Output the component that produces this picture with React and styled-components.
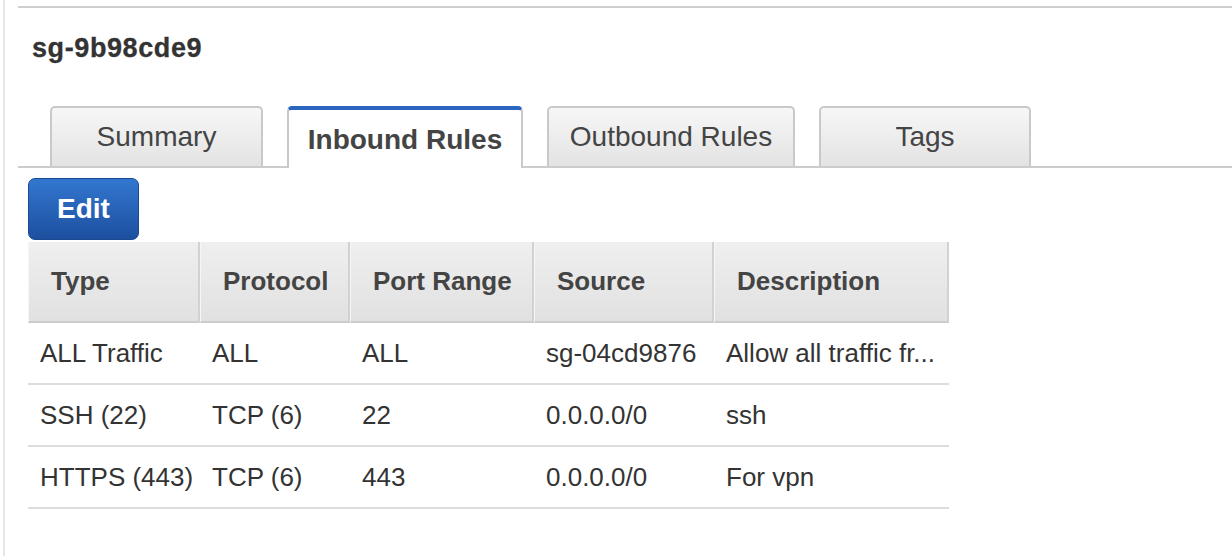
import React from 'react'
import styled, { createGlobalStyle } from 'styled-components'

const GlobalStyle = createGlobalStyle`
  body {
    margin: 0;
    background: #fff;
    font-family: "Liberation Sans", Arial, Helvetica, sans-serif;
    color: #333;
  }
`

const tabs = [
  { label: 'Summary', width: 213 },
  { label: 'Inbound Rules', width: 236, active: true },
  { label: 'Outbound Rules', width: 248 },
  { label: 'Tags', width: 212 },
]

const columns = [
  { label: 'Type', width: 172 },
  { label: 'Protocol', width: 150 },
  { label: 'Port Range', width: 184 },
  { label: 'Source', width: 180 },
  { label: 'Description', width: 235 },
]

const rules = [
  ['ALL Traffic', 'ALL', 'ALL', 'sg-04cd9876', 'Allow all traffic fr...'],
  ['SSH (22)', 'TCP (6)', '22', '0.0.0.0/0', 'ssh'],
  ['HTTPS (443)', 'TCP (6)', '443', '0.0.0.0/0', 'For vpn'],
]

export default function App() {
  return (
    <Page>
      <GlobalStyle />
      <Panel>
        <Title>sg-9b98cde9</Title>

        <TabBar>
          {tabs.map(t => (
            <Tab key={t.label} $active={t.active} $width={t.width}>
              {t.label}
            </Tab>
          ))}
        </TabBar>

        <Content>
          <EditButton>Edit</EditButton>

          <RulesTable>
            <colgroup>
              {columns.map(c => (
                <col key={c.label} style={{ width: c.width }} />
              ))}
            </colgroup>
            <thead>
              <tr>
                {columns.map(c => (
                  <HeadCell key={c.label}>{c.label}</HeadCell>
                ))}
              </tr>
            </thead>
            <tbody>
              {rules.map((r, i) => (
                <tr key={i}>
                  {r.map((v, j) => (
                    <Cell key={j}>{v}</Cell>
                  ))}
                </tr>
              ))}
            </tbody>
          </RulesTable>
        </Content>
      </Panel>
    </Page>
  )
}

const Page = styled.div`
  margin-left: 3px;
  border-left: 2px solid #e6e6e6;
  min-height: 100vh;
  padding-left: 13px;
  padding-top: 6px;
  box-sizing: border-box;
`

const Panel = styled.div`
  border-top: 2px solid #cfcfcf;
`

const Title = styled.h2`
  margin: 0;
  padding: 25px 0 0 14px;
  font-size: 27px;
  line-height: 30px;
  letter-spacing: 0.6px;
  font-weight: bold;
  color: #333;
  -webkit-text-stroke: 0.3px #333;
`

const TabBar = styled.div`
  display: flex;
  align-items: flex-end;
  gap: 24px;
  margin-top: 43px;
  padding-left: 32px;
  border-bottom: 2px solid #cccccc;
`

const Tab = styled.div`
  box-sizing: border-box;
  width: ${p => p.$width}px;
  display: flex;
  align-items: center;
  justify-content: center;
  font-size: 28px;
  white-space: nowrap;
  border: 2px solid #c9c9c9;
  border-bottom: none;
  border-radius: 5px 5px 0 0;
  height: ${p => (p.$active ? 62 : 60)}px;
  margin-bottom: ${p => (p.$active ? -2 : 0)}px;
  padding-top: ${p => (p.$active ? 2 : 0)}px;
  color: #444;
  font-weight: ${p => (p.$active ? 'bold' : 'normal')};
  background: ${p =>
    p.$active ? '#fff' : 'linear-gradient(#f7f7f7, #e3e3e3)'};
  border-top: ${p => (p.$active ? '4px solid #2a66bd' : '2px solid #c9c9c9')};
`

const Content = styled.div`
  padding: 10px 0 0 10px;
`

const EditButton = styled.button`
  display: block;
  box-sizing: border-box;
  width: 111px;
  height: 62px;
  border: 1px solid #1b4a92;
  border-radius: 7px;
  background: linear-gradient(#3277cf, #1d4f9f);
  color: #fff;
  font-family: "Liberation Sans", Arial, sans-serif;
  font-size: 28px;
  font-weight: bold;
  padding: 0;
  cursor: pointer;
`

const RulesTable = styled.table`
  margin-top: 2px;
  width: 921px;
  table-layout: fixed;
  border-collapse: separate;
  border-spacing: 0;
`

const HeadCell = styled.th`
  box-sizing: border-box;
  height: 81px;
  padding: 0 0 0 22px;
  text-align: left;
  font-size: 26px;
  font-weight: bold;
  color: #444;
  white-space: nowrap;
  background: linear-gradient(#efefef, #e1e1e1);
  border-left: 1px solid #f6f6f6;
  border-right: 2px solid #d2d2d2;
  border-bottom: 2px solid #cccccc;
`

const Cell = styled.td`
  box-sizing: border-box;
  height: 62px;
  padding: 0 0 0 12px;
  font-size: 26px;
  color: #333;
  white-space: nowrap;
  overflow: hidden;
  border-bottom: 2px solid #dddddd;
`
